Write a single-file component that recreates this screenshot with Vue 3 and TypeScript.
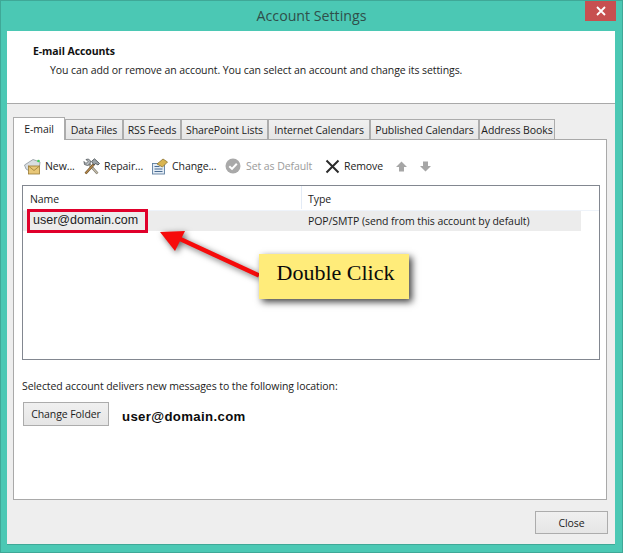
<script setup lang="ts">
const tabs: string[] = ['Data Files', 'RSS Feeds', 'SharePoint Lists', 'Internet Calendars', 'Published Calendars', 'Address Books']
</script>

<template>
  <div class="window">
    <header class="titlebar">
      <span class="title">Account Settings</span>
      <button class="close-x" aria-label="Close">
        <svg width="10" height="10" viewBox="0 0 10 10"><path d="M1 1 9 9M9 1 1 9" stroke="#fff" stroke-width="1.8" fill="none" /></svg>
      </button>
    </header>

    <main class="client">
      <section class="intro">
        <h1>E-mail Accounts</h1>
        <p>You can add or remove an account. You can select an account and change its settings.</p>
      </section>

      <section class="content">
        <nav class="tabs">
          <div class="tab active">E-mail</div>
          <div v-for="t in tabs" :key="t" class="tab">{{ t }}</div>
        </nav>

        <div class="panel">
          <div class="toolbar">
            <div class="tool">
              <svg class="ico" width="17" height="17" viewBox="0 0 17 17">
                <path d="M.5 7 9 1.500 16 4 15.500 8 7 14 2 11Z" fill="#d9dee2" stroke="#8d969c" stroke-width=".8" />
                <rect x="4.500" y="8" width="11" height="8" fill="#e8c778" stroke="#9a7a35" stroke-width=".8" />
                <path d="M4.500 8 10 12.500 15.500 8" fill="none" stroke="#9a7a35" stroke-width=".8" />
                <circle cx="14.500" cy="3" r="1.300" fill="#3fcf5c" />
              </svg>
              <span>New...</span>
            </div>
            <div class="tool">
              <svg class="ico" width="17" height="17" viewBox="0 0 17 17">
                <path d="M5 5 14.500 15.500" stroke="#6f6a5e" stroke-width="2.600" fill="none" />
                <path d="M5 5 14.500 15.500" stroke="#c9c2ae" stroke-width="1.200" fill="none" />
                <path d="M1 3.500 3 5.500 5 3.500 3 1.500 5.500 1 7.500 3 7 6 4.500 7.500 1.500 6.500Z" fill="#b7bcc0" stroke="#4e5458" stroke-width=".8" />
                <path d="M11.500 5.500 2.500 15.500" stroke="#5f4a2c" stroke-width="2.600" fill="none" />
                <path d="M11.500 5.500 2.500 15.500" stroke="#b98b4c" stroke-width="1.200" fill="none" />
                <path d="M8.500 3.500 11.500 .8 16.500 5.500 15 7 12.500 5.500 11 7Z" fill="#9ba2a7" stroke="#3f4549" stroke-width=".8" />
              </svg>
              <span>Repair...</span>
            </div>
            <div class="tool">
              <svg class="ico" width="17" height="17" viewBox="0 0 17 17">
                <rect x="1.500" y="5.500" width="12" height="10.500" fill="#e3ecf5" stroke="#5f7f9f" stroke-width=".9" />
                <path d="M3.500 8.500h5M3.500 11h8M3.500 13.500h8" stroke="#4a6c92" stroke-width="1" />
                <path d="M6 6 12 1l4.500 3-5 5Z" fill="#d9b552" stroke="#8d7430" stroke-width=".8" />
              </svg>
              <span>Change...</span>
            </div>
            <div class="tool disabled">
              <svg class="ico" width="16" height="16" viewBox="0 0 16 16">
                <circle cx="8" cy="8" r="7.500" fill="#a9a9a9" />
                <path d="M4.300 8.200 7 10.900l4.800-5.200" fill="none" stroke="#fff" stroke-width="2" />
              </svg>
              <span>Set as Default</span>
            </div>
            <div class="tool">
              <svg class="ico" width="15" height="15" viewBox="0 0 15 15">
                <path d="M1.500 1.500 13.500 13.500M13.500 1.500 1.500 13.500" stroke="#2b2b2b" stroke-width="2" fill="none" />
              </svg>
              <span>Remove</span>
            </div>
            <svg class="arrow-ico" width="11" height="11" viewBox="0 0 11 11"><path d="M5.500 .5 11 6H8v4.500H3V6H0Z" fill="#a6a6a6" /></svg>
            <svg class="arrow-ico" width="11" height="11" viewBox="0 0 11 11"><path d="M5.500 10.500 11 5H8V.5H3V5H0Z" fill="#a6a6a6" /></svg>
          </div>

          <div class="list">
            <div class="list-head">
              <div class="col-name">Name</div>
              <div class="col-type">Type</div>
            </div>
            <div class="list-row">
              <div class="col-name email">user@domain.com</div>
              <div class="col-type">POP/SMTP (send from this account by default)</div>
            </div>
          </div>

          <p class="deliver">Selected account delivers new messages to the following location:</p>
          <div class="folder-row">
            <button class="btn change-folder">Change Folder</button>
            <strong class="folder">user@domain.com</strong>
          </div>
        </div>

        <footer class="footer">
          <button class="btn close-btn">Close</button>
        </footer>
      </section>
    </main>

    <!-- annotations drawn over the screenshot -->
    <div class="red-box"></div>
    <svg class="pointer" width="623" height="553" viewBox="0 0 623 553">
      <path d="M259 275.500 178 238" stroke="#f60b0b" stroke-width="4.500" fill="none" />
      <path d="M160 232 185 231 175 251Z" fill="#f60b0b" />
    </svg>
    <div class="callout">Double Click</div>
  </div>
</template>

<style>
html, body { margin: 0; background: #4bc8b4; }
</style>

<style scoped>
.window {
  position: relative;
  width: 623px;
  height: 553px;
  box-sizing: border-box;
  background: #4bc8b4;
  border: 1px solid #3fa897;
  display: flex;
  flex-direction: column;
  font-family: "Open Sans", "Noto Sans", sans-serif;
  font-size: 10.5px;
  letter-spacing: -.08px;
  color: #1c1c1c;
  overflow: hidden;
}
.titlebar {
  height: 30px;
  flex: none;
  display: flex;
  justify-content: center;
  position: relative;
}
.title {
  font-size: 14.2px;
  line-height: 30px;
  letter-spacing: 0;
  color: #2f4f4a;
}
.close-x {
  position: absolute;
  top: 0;
  right: 6px;
  width: 31px;
  height: 20px;
  padding: 0;
  border: 0;
  background: #c75050;
  display: flex;
  align-items: center;
  justify-content: center;
}
.client {
  flex: 1;
  margin: 0 7px 7px 6px;
  border: 1px solid #3fa897;
  border-width: 0 0 1px;
  display: flex;
  flex-direction: column;
  min-height: 0;
  background: #eee;
}
.intro {
  height: 73px;
  flex: none;
  box-sizing: border-box;
  background: #fff;
  border-bottom: 1px solid #a9a9a9;
  padding: 13px 0 0 26px;
}
.intro h1 {
  margin: 0;
  font-size: 10.5px;
  line-height: 15px;
  font-weight: 700;
  color: #111;
}
.intro p {
  margin: 4px 0 0 17px;
  line-height: 15px;
}
.content {
  flex: 1;
  display: flex;
  flex-direction: column;
  padding: 13px 8px 0 6px;
  min-height: 0;
}
.tabs {
  display: flex;
  align-items: flex-end;
  height: 22px;
  flex: none;
}
.tab {
  height: 20px;
  box-sizing: border-box;
  border: 1px solid #acacac;
  border-bottom: 0;
  background: linear-gradient(#f0f0f0, #e5e5e5);
  line-height: 20px;
  text-align: center;
  white-space: nowrap;
}
.tab:nth-child(2) { width: 58px; }
.tab:nth-child(3) { width: 58px; }
.tab:nth-child(4) { width: 87px; }
.tab:nth-child(5) { width: 102px; }
.tab:nth-child(6) { width: 109px; }
.tab:nth-child(7) { width: 76px; }
.tab.active {
  width: 52px;
  height: 23px;
  margin-bottom: -1px;
  position: relative;
  z-index: 1;
  border-width: 1px 1px 0;
  background: #fff;
  line-height: 22px;
}
.panel {
  height: 361px;
  flex: none;
  box-sizing: border-box;
  background: #fff;
  border: 1px solid #a9a9a9;
  padding: 14px 6px 0 8px;
}
.toolbar {
  height: 24px;
  display: grid;
  grid-template-columns: 59px 68px 74px 100px 71px 24px 24px;
  align-items: center;
  padding-left: 2px;
}
.tool {
  display: flex;
  align-items: center;
  gap: 4px;
  white-space: nowrap;
}
.tool .ico { flex: none; }
.tool.disabled { color: #9b9b9b; gap: 5px; }
.list {
  margin-top: 7px;
  height: 175px;
  box-sizing: border-box;
  border: 1px solid #828790;
}
.list-head,
.list-row {
  display: grid;
  grid-template-columns: 279px 279px;
}
.list-head {
  height: 24px;
  border-bottom: 1px solid #eef3fa;
  line-height: 27px;
}
.list-head .col-name {
  border-right: 1px solid #e3ebf6;
  padding-left: 7px;
  height: 23px;
}
.list-head .col-type { padding-left: 6px; }
.list-row {
  height: 20px;
  line-height: 20px;
  background: linear-gradient(90deg, #ececec 558px, #fff 558px);
}
.list-row .col-type { padding-left: 6px; }
.email {
  font-family: "Liberation Sans", Arial, sans-serif;
  font-size: 12.5px;
  letter-spacing: 0;
  padding-left: 10px;
  line-height: 18px;
  color: #222;
}
.deliver {
  margin: 19px 0 0;
  line-height: 15px;
}
.folder-row {
  margin-top: 8px;
  display: flex;
  align-items: center;
}
.btn {
  box-sizing: border-box;
  border: 1px solid #acacac;
  background: linear-gradient(#f0f0f0, #e5e5e5);
  font: inherit;
  letter-spacing: inherit;
  color: inherit;
  padding: 0;
}
.change-folder {
  width: 86px;
  height: 24px;
  margin-left: 1px;
}
.folder {
  margin: 5px 0 0 13px;
  font-family: "Liberation Sans", Arial, sans-serif;
  font-size: 13.2px;
  letter-spacing: .35px;
  color: #0c0c0c;
}
.footer {
  display: flex;
  justify-content: flex-end;
  padding: 11px 0 0;
}
.close-btn {
  width: 73px;
  height: 23px;
  margin-right: -1px;
}
.red-box {
  position: absolute;
  left: 26px;
  top: 208px;
  width: 121px;
  height: 24px;
  box-sizing: border-box;
  border: 3px solid #e0002b;
}
.pointer {
  position: absolute;
  left: -1px;
  top: -1px;
  pointer-events: none;
  filter: drop-shadow(2px 2px 3px rgba(0, 0, 0, .6));
}
.callout {
  position: absolute;
  left: 258px;
  top: 253px;
  width: 150px;
  height: 45px;
  box-sizing: border-box;
  padding-left: 3px;
  background: #ffec7a;
  box-shadow: 3px 3px 7px rgba(0, 0, 0, .75);
  font-family: "Liberation Serif", "Times New Roman", serif;
  font-size: 22px;
  letter-spacing: 0;
  line-height: 38px;
  text-align: center;
  color: #0a0a0a;
}
</style>
